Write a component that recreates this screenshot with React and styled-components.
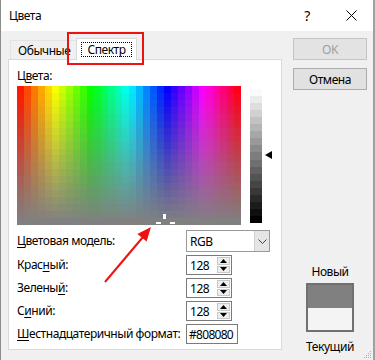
import React from 'react';
import styled, { createGlobalStyle } from 'styled-components';

const GlobalStyle = createGlobalStyle`
    html, body {
        margin: 0;
        padding: 0;
        background: #ffffff;
    }
    body {
        font-family: "Noto Sans", "Open Sans", sans-serif;
        font-size: 12px;
        letter-spacing: -0.45px;
        color: #000;
    }
`;

// hue at full saturation, lightness 50%
const hueColor = (h) => {
    const f = (n) => {
        const k = (n + h / 30) % 12;
        const v = 0.5 - 0.5 * Math.max(-1, Math.min(k - 3, 9 - k, 1));
        return Math.round(v * 255);
    };
    return `rgb(${f(0)},${f(8)},${f(4)})`;
};

const steps = (count, size, colorAt) => {
    const parts = [];
    for (let i = 0; i < count; i++) {
        parts.push(`${colorAt(i)} ${(i * size).toFixed(2)}px ${((i + 1) * size).toFixed(2)}px`);
    }
    return parts.join(', ');
};

const SPEC_W = 224;
const SPEC_H = 139;
const hueBands = steps(32, SPEC_W / 32, (i) => hueColor(((i + 0.5) / 32) * 360));
const satBands = steps(20, SPEC_H / 20, (i) => `rgba(128,128,128,${(i / 19).toFixed(3)})`);
const lumBands = steps(19, 134 / 19, (i) => {
    const v = Math.round(250 - (i / 18) * 250);
    return `rgb(${v},${v},${v})`;
});

const Window = styled.div`
    position: relative;
    width: 375px;
    height: 360px;
    box-sizing: border-box;
    border-left: 1px solid #8c8c8c;
    border-right: 2px solid #a0a0a0;
    background: #f0f0f0;
    display: flex;
    flex-direction: column;
    overflow: hidden;
`;

const TitleBar = styled.div`
    height: 31px;
    background: #ffffff;
    display: flex;
    align-items: center;
    padding-left: 8px;
    flex-shrink: 0;
`;

const Title = styled.div`
    flex: 1;
    font-size: 12px;
`;

const TitleButton = styled.div`
    width: 44px;
    height: 31px;
    display: flex;
    align-items: center;
    justify-content: center;
    font-size: 14px;
`;

const Body = styled.div`
    flex: 1;
    display: flex;
    padding: 7px 0 5px 7px;
    gap: 11px;
`;

const LeftCol = styled.div`
    width: 274px;
    display: flex;
    flex-direction: column;
`;

const TabRow = styled.div`
    height: 21px;
    display: flex;
    align-items: flex-end;
    padding-left: 2px;
`;

const Tab = styled.div`
    position: relative;
    box-sizing: border-box;
    height: ${(p) => (p.$active ? 22 : 19)}px;
    margin-bottom: ${(p) => (p.$active ? -1 : 0)}px;
    margin-left: ${(p) => (p.$active ? -2 : 0)}px;
    padding: 0 ${(p) => (p.$active ? 4 : 7)}px;
    background: ${(p) => (p.$active ? '#ffffff' : '#f0f0f0')};
    border: 1px solid ${(p) => (p.$active ? '#d9d9d9' : '#e3e3e3')};
    border-bottom: none;
    z-index: ${(p) => (p.$active ? 1 : 0)};
    display: flex;
    align-items: center;
`;

const FocusLabel = styled.span`
    border: 1px dotted #000;
    padding: 0 5px;
    line-height: 13px;
`;

const Panel = styled.div`
    box-sizing: border-box;
    height: 291px;
    background: #ffffff;
    border: 1px solid #d9d9d9;
    padding: 8px 8px 0 8px;
    display: flex;
    flex-direction: column;
`;

const Label = styled.div`
    line-height: 16px;
    white-space: nowrap;
`;

const Key = styled.span`
    text-decoration: underline;
    text-underline-offset: 2px;
`;

const SpectrumRow = styled.div`
    margin-top: 2px;
    display: flex;
    gap: 9px;
    height: ${SPEC_H}px;
`;

const Spectrum = styled.div`
    position: relative;
    width: ${SPEC_W}px;
    height: ${SPEC_H}px;
    overflow: hidden;
    background:
        linear-gradient(to bottom, ${satBands}),
        linear-gradient(to right, ${hueBands});
`;

const CrossArm = styled.div`
    position: absolute;
    background: #ffffff;
    left: ${(p) => p.$x}px;
    top: ${(p) => p.$y}px;
    width: ${(p) => p.$w}px;
    height: ${(p) => p.$h}px;
`;

const LumBar = styled.div`
    position: relative;
    margin-top: 3px;
    width: 12px;
    height: 134px;
    background: linear-gradient(to bottom, ${lumBands});
`;

const LumPointer = styled.div`
    position: absolute;
    left: 15px;
    top: 62px;
    width: 0;
    height: 0;
    border-top: 4px solid transparent;
    border-bottom: 4px solid transparent;
    border-right: 7px solid #000;
`;

const Form = styled.div`
    margin-top: 5px;
    display: grid;
    grid-template-columns: 169px auto;
    grid-template-rows: 22px 20px 20px 20px 20px;
    row-gap: 3px;
    align-items: center;
`;

const Field = styled.div`
    box-sizing: border-box;
    width: ${(p) => p.$w}px;
    height: ${(p) => p.$h || 20}px;
    border: 1px solid ${(p) => p.$border || '#7a7a7a'};
    background: #ffffff;
    display: flex;
    align-items: stretch;
`;

const FieldText = styled.div`
    flex: 1;
    display: flex;
    align-items: center;
    padding-left: ${(p) => (p.$tight ? 2 : 3)}px;
    font-size: 12px;
    letter-spacing: ${(p) => (p.$tight ? -0.7 : -0.45)}px;
`;

const DropButton = styled.div`
    width: 14px;
    border-left: 1px solid #d0d0d0;
    background: #e5e5e5;
    display: flex;
    align-items: center;
    justify-content: center;
`;

const Spin = styled.div`
    width: 15px;
    display: flex;
    flex-direction: column;
    gap: 1px;
    padding: 1px;
    box-sizing: border-box;
`;

const SpinHalf = styled.div`
    flex: 1;
    background: #eeeeee;
    border: 1px solid #c8c8c8;
    display: flex;
    align-items: center;
    justify-content: center;
`;

const RightCol = styled.div`
    width: 74px;
    display: flex;
    flex-direction: column;
    gap: 8px;
`;

const Button = styled.div`
    box-sizing: border-box;
    height: 22px;
    border: 1px solid ${(p) => (p.$disabled ? '#c4c4c4' : '#adadad')};
    background: ${(p) => (p.$disabled ? '#e3e3e3' : '#e1e1e1')};
    color: ${(p) => (p.$disabled ? '#a0a0a0' : '#000')};
    display: flex;
    align-items: center;
    justify-content: center;
`;

const Preview = styled.div`
    margin-top: auto;
    display: flex;
    flex-direction: column;
    align-items: center;
`;

const Swatch = styled.div`
    box-sizing: border-box;
    width: 48px;
    height: 49px;
    margin: 3px 0 7px 0;
    border: 2px solid #707070;
    display: flex;
    flex-direction: column;
`;

const SwatchHalf = styled.div`
    flex: 1;
    background: ${(p) => p.$color};
`;

const Highlight = styled.div`
    position: absolute;
    left: 66px;
    top: 32px;
    width: 77px;
    height: 33px;
    box-sizing: border-box;
    border: 2px solid #ee1111;
`;

const Arrow = styled.svg`
    position: absolute;
    left: 100px;
    top: 220px;
`;

const Grip = styled.svg`
    position: absolute;
    right: 1px;
    bottom: 1px;
`;

const Up = () => (
    <svg width="7" height="4" viewBox="0 0 7 4"><polygon points="0,4 7,4 3.5,0" fill="#000" /></svg>
);
const Down = () => (
    <svg width="7" height="4" viewBox="0 0 7 4"><polygon points="0,0 7,0 3.5,4" fill="#000" /></svg>
);

const Spinner = ({ value }) => (
    <Field $w={46}>
        <FieldText>{value}</FieldText>
        <Spin>
            <SpinHalf><Up /></SpinHalf>
            <SpinHalf><Down /></SpinHalf>
        </Spin>
    </Field>
);

export default function App() {
    return (
        <Window>
            <GlobalStyle />
            <TitleBar>
                <Title>Цвета</Title>
                <TitleButton>?</TitleButton>
                <TitleButton>
                    <svg width="11" height="11" viewBox="0 0 11 11">
                        <path d="M0.5 0.5 L10.5 10.5 M10.5 0.5 L0.5 10.5" stroke="#000" strokeWidth="1" />
                    </svg>
                </TitleButton>
            </TitleBar>
            <Body>
                <LeftCol>
                    <TabRow>
                        <Tab>Обычные</Tab>
                        <Tab $active><FocusLabel>Спектр</FocusLabel></Tab>
                    </TabRow>
                    <Panel>
                        <Label>Ц<Key>в</Key>ета:</Label>
                        <SpectrumRow>
                            <Spectrum>
                                <CrossArm $x={146} $y={128} $w={3} $h={5} />
                                <CrossArm $x={139} $y={136} $w={5} $h={2} />
                                <CrossArm $x={153} $y={136} $w={5} $h={2} />
                            </Spectrum>
                            <LumBar>
                                <LumPointer />
                            </LumBar>
                        </SpectrumRow>
                        <Form>
                            <Label><Key>Ц</Key>ветовая модель:</Label>
                            <Field $w={84} $h={22} $border="#999999">
                                <FieldText>RGB</FieldText>
                                <DropButton>
                                    <svg width="9" height="5" viewBox="0 0 9 5">
                                        <path d="M0.5 0.5 L4.5 4.5 L8.5 0.5" stroke="#444" fill="none" strokeWidth="1" />
                                    </svg>
                                </DropButton>
                            </Field>
                            <Label>Крас<Key>н</Key>ый:</Label>
                            <Spinner value="128" />
                            <Label>Зелены<Key>й</Key>:</Label>
                            <Spinner value="128" />
                            <Label>С<Key>и</Key>ний:</Label>
                            <Spinner value="128" />
                            <Label><Key>Ш</Key>естнадцатеричный формат:</Label>
                            <Field $w={52}>
                                <FieldText $tight>#808080</FieldText>
                            </Field>
                        </Form>
                    </Panel>
                </LeftCol>
                <RightCol>
                    <Button $disabled>OK</Button>
                    <Button>Отмена</Button>
                    <Preview>
                        <Label>Новый</Label>
                        <Swatch>
                            <SwatchHalf $color="#808080" />
                            <SwatchHalf $color="#f4f4f4" />
                        </Swatch>
                        <Label>Текущий</Label>
                    </Preview>
                </RightCol>
            </Body>
            <Highlight />
            <Arrow width="60" height="70" viewBox="0 0 60 70">
                <line x1="4" y1="62" x2="42" y2="17" stroke="#ee1111" strokeWidth="2" />
                <polygon points="50,7 45.6,21.6 36.4,13.9" fill="#ee1111" />
            </Arrow>
            <Grip width="10" height="10" viewBox="0 0 10 10">
                <g fill="#b0b0b0">
                    <rect x="8" y="2" width="1" height="1" />
                    <rect x="6" y="4" width="1" height="1" />
                    <rect x="8" y="4" width="1" height="1" />
                    <rect x="4" y="6" width="1" height="1" />
                    <rect x="6" y="6" width="1" height="1" />
                    <rect x="8" y="6" width="1" height="1" />
                    <rect x="2" y="8" width="1" height="1" />
                    <rect x="4" y="8" width="1" height="1" />
                    <rect x="6" y="8" width="1" height="1" />
                    <rect x="8" y="8" width="1" height="1" />
                </g>
            </Grip>
        </Window>
    );
}
